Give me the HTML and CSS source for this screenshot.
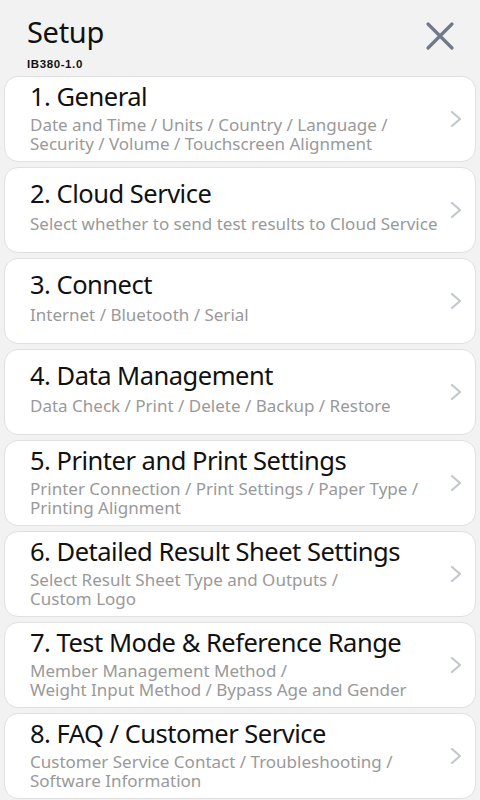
FILE: index.html
```html
<!DOCTYPE html>
<html lang="en">
<head>
    <meta charset="UTF-8">
    <meta name="viewport" content="width=device-width, initial-scale=1.0">
    <title>Setup</title>
    <link rel="stylesheet" href="styles.css">
</head>
<body>
    <div class="header">
        <div class="header-text">
            <div class="title">Setup</div>
            <div class="version">IB380-1.0</div>
        </div>
        <button class="close-btn" aria-label="Close">
            <svg width="30" height="30" viewBox="0 0 30 30">
                <path d="M3 3 L27 27 M27 3 L3 27" stroke="#6f7a86" stroke-width="3.2" stroke-linecap="round" fill="none"/>
            </svg>
        </button>
    </div>

    <div class="menu">
        <a class="item" href="#">
            <div class="item-text">
                <div class="item-title">1. General</div>
                <div class="item-sub">Date and Time / Units / Country / Language /<br>Security / Volume / Touchscreen Alignment</div>
            </div>
            <svg class="chevron" width="12" height="18" viewBox="0 0 12 18"><path d="M2 2 L10 9 L2 16" stroke="#c3c7ce" stroke-width="2.2" fill="none" stroke-linecap="round" stroke-linejoin="round"/></svg>
        </a>
        <a class="item single" href="#">
            <div class="item-text">
                <div class="item-title">2. Cloud Service</div>
                <div class="item-sub">Select whether to send test results to Cloud Service</div>
            </div>
            <svg class="chevron" width="12" height="18" viewBox="0 0 12 18"><path d="M2 2 L10 9 L2 16" stroke="#c3c7ce" stroke-width="2.2" fill="none" stroke-linecap="round" stroke-linejoin="round"/></svg>
        </a>
        <a class="item single" href="#">
            <div class="item-text">
                <div class="item-title">3. Connect</div>
                <div class="item-sub">Internet / Bluetooth / Serial</div>
            </div>
            <svg class="chevron" width="12" height="18" viewBox="0 0 12 18"><path d="M2 2 L10 9 L2 16" stroke="#c3c7ce" stroke-width="2.2" fill="none" stroke-linecap="round" stroke-linejoin="round"/></svg>
        </a>
        <a class="item single" href="#">
            <div class="item-text">
                <div class="item-title">4. Data Management</div>
                <div class="item-sub">Data Check / Print / Delete / Backup / Restore</div>
            </div>
            <svg class="chevron" width="12" height="18" viewBox="0 0 12 18"><path d="M2 2 L10 9 L2 16" stroke="#c3c7ce" stroke-width="2.2" fill="none" stroke-linecap="round" stroke-linejoin="round"/></svg>
        </a>
        <a class="item" href="#">
            <div class="item-text">
                <div class="item-title">5. Printer and Print Settings</div>
                <div class="item-sub">Printer Connection / Print Settings / Paper Type /<br>Printing Alignment</div>
            </div>
            <svg class="chevron" width="12" height="18" viewBox="0 0 12 18"><path d="M2 2 L10 9 L2 16" stroke="#c3c7ce" stroke-width="2.2" fill="none" stroke-linecap="round" stroke-linejoin="round"/></svg>
        </a>
        <a class="item" href="#">
            <div class="item-text">
                <div class="item-title">6. Detailed Result Sheet Settings</div>
                <div class="item-sub">Select Result Sheet Type and Outputs /<br>Custom Logo</div>
            </div>
            <svg class="chevron" width="12" height="18" viewBox="0 0 12 18"><path d="M2 2 L10 9 L2 16" stroke="#c3c7ce" stroke-width="2.2" fill="none" stroke-linecap="round" stroke-linejoin="round"/></svg>
        </a>
        <a class="item" href="#">
            <div class="item-text">
                <div class="item-title">7. Test Mode &amp; Reference Range</div>
                <div class="item-sub">Member Management Method /<br>Weight Input Method / Bypass Age and Gender</div>
            </div>
            <svg class="chevron" width="12" height="18" viewBox="0 0 12 18"><path d="M2 2 L10 9 L2 16" stroke="#c3c7ce" stroke-width="2.2" fill="none" stroke-linecap="round" stroke-linejoin="round"/></svg>
        </a>
        <a class="item" href="#">
            <div class="item-text">
                <div class="item-title">8. FAQ / Customer Service</div>
                <div class="item-sub">Customer Service Contact / Troubleshooting /<br>Software Information</div>
            </div>
            <svg class="chevron" width="12" height="18" viewBox="0 0 12 18"><path d="M2 2 L10 9 L2 16" stroke="#c3c7ce" stroke-width="2.2" fill="none" stroke-linecap="round" stroke-linejoin="round"/></svg>
        </a>
    </div>
</body>
</html>
```
FILE: styles.css
```css
/* Global */
body {
    margin: 0;
    font-family: "Noto Sans", "Open Sans", sans-serif;
    background-color: #f2f2f2;
    color: #111111;
    overflow: hidden;
}

a {
    text-decoration: none;
    color: inherit;
}

button {
    font-family: inherit;
    border: none;
    outline: none;
    background: none;
    padding: 0;
    cursor: pointer;
}

/* Header */
.header {
    display: flex;
    justify-content: space-between;
    align-items: flex-start;
    padding: 12px 25px 0 27px;
    height: 64px;
}

.title {
    font-size: 29px;
    line-height: 40px;
    letter-spacing: -0.3px;
}

.version {
    font-family: "Liberation Sans", Arial, sans-serif;
    font-weight: bold;
    font-size: 11.5px;
    line-height: 14px;
    letter-spacing: 0.6px;
    margin-top: 5px;
}

.close-btn {
    margin-top: 9px;
    width: 30px;
    height: 30px;
}

/* Menu */
.menu {
    display: flex;
    flex-direction: column;
    gap: 5px;
    padding: 0 4px;
}

.item {
    display: flex;
    align-items: center;
    height: 86px;
    box-sizing: border-box;
    padding: 0 13px 5px 25px;
    background: #ffffff;
    border: 1px solid #e0e0e0;
    border-radius: 14px;
}

.item.single {
    padding-bottom: 9px;
}

.item-text {
    flex: 1;
}

.item-title {
    font-size: 25.5px;
    line-height: 30px;
    letter-spacing: -0.5px;
}

.item-sub {
    margin-top: 4px;
    font-size: 17px;
    line-height: 19px;
    color: #999999;
}

.single .item-sub {
    margin-top: 6px;
}

.chevron {
    flex-shrink: 0;
    margin-top: 5px;
}

.single .chevron {
    margin-top: 9px;
}
```
